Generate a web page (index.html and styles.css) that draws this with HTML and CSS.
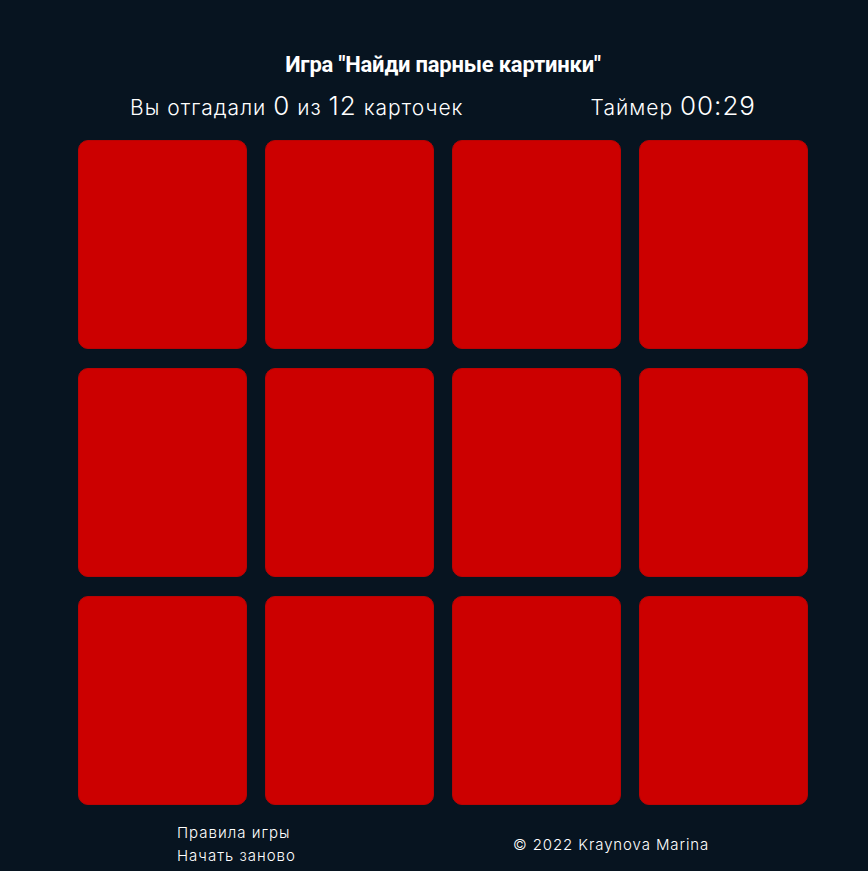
FILE: index.html
```html
<!DOCTYPE html>
<html lang="ru">
<head>
<meta charset="utf-8">
<title>Найди парные картинки</title>
<link rel="stylesheet" href="styles.css">
</head>
<body>
<main class="game">
  <h1 class="title">Игра "Найди парные картинки"</h1>
  <div class="stats">
    <p class="score">Вы отгадали <span class="num">0</span> из <span class="num">12</span> карточек</p>
    <p class="timer">Таймер <span class="num">00:29</span></p>
  </div>
  <div class="board">
    <div class="card"></div><div class="card"></div><div class="card"></div><div class="card"></div>
    <div class="card"></div><div class="card"></div><div class="card"></div><div class="card"></div>
    <div class="card"></div><div class="card"></div><div class="card"></div><div class="card"></div>
  </div>
  <footer class="footer">
    <div class="links">
      <a class="link" href="#">Правила игры</a>
      <a class="link" href="#">Начать заново</a>
    </div>
    <p class="copy">© 2022 Kraynova Marina</p>
  </footer>
</main>
</body>
</html>
```
FILE: styles.css
```css
html, body {
  margin: 0;
  background: #071420;
  color: #ffffff;
  font-family: Inter, "Noto Sans", sans-serif;
}
.game {
  width: 730px;
  margin-left: 78px;
  padding-top: 52px;
}
.title {
  margin: 0;
  text-align: center;
  font-family: Roboto, sans-serif;
  font-weight: 700;
  font-size: 22px;
  line-height: 26px;
  letter-spacing: -0.2px;
}
.stats {
  display: flex;
  justify-content: space-between;
  align-items: baseline;
  padding: 0 52px;
  margin-top: 12px;
  height: 40px;
}
.stats p {
  margin: 0;
  font-size: 21px;
  font-weight: 300;
  letter-spacing: 1px;
}
.num {
  font-size: 26px;
}
.board {
  display: grid;
  grid-template-columns: repeat(4, 169px);
  grid-auto-rows: 209px;
  column-gap: 18px;
  row-gap: 19px;
  margin-top: 10px;
}
.card {
  background: #cc0000;
  border: 1px solid #b80303;
  border-radius: 10px;
}
.footer {
  display: flex;
  align-items: center;
  padding: 18px 0 0 99px;
}
.links {
  display: flex;
  flex-direction: column;
  gap: 4px;
  width: 336px;
}
.link {
  color: #ffffff;
  text-decoration: none;
  font-size: 15px;
  font-weight: 300;
  line-height: 19px;
  letter-spacing: 1px;
}
.copy {
  margin: 0;
  font-size: 15px;
  font-weight: 300;
  letter-spacing: 0.9px;
}
```
